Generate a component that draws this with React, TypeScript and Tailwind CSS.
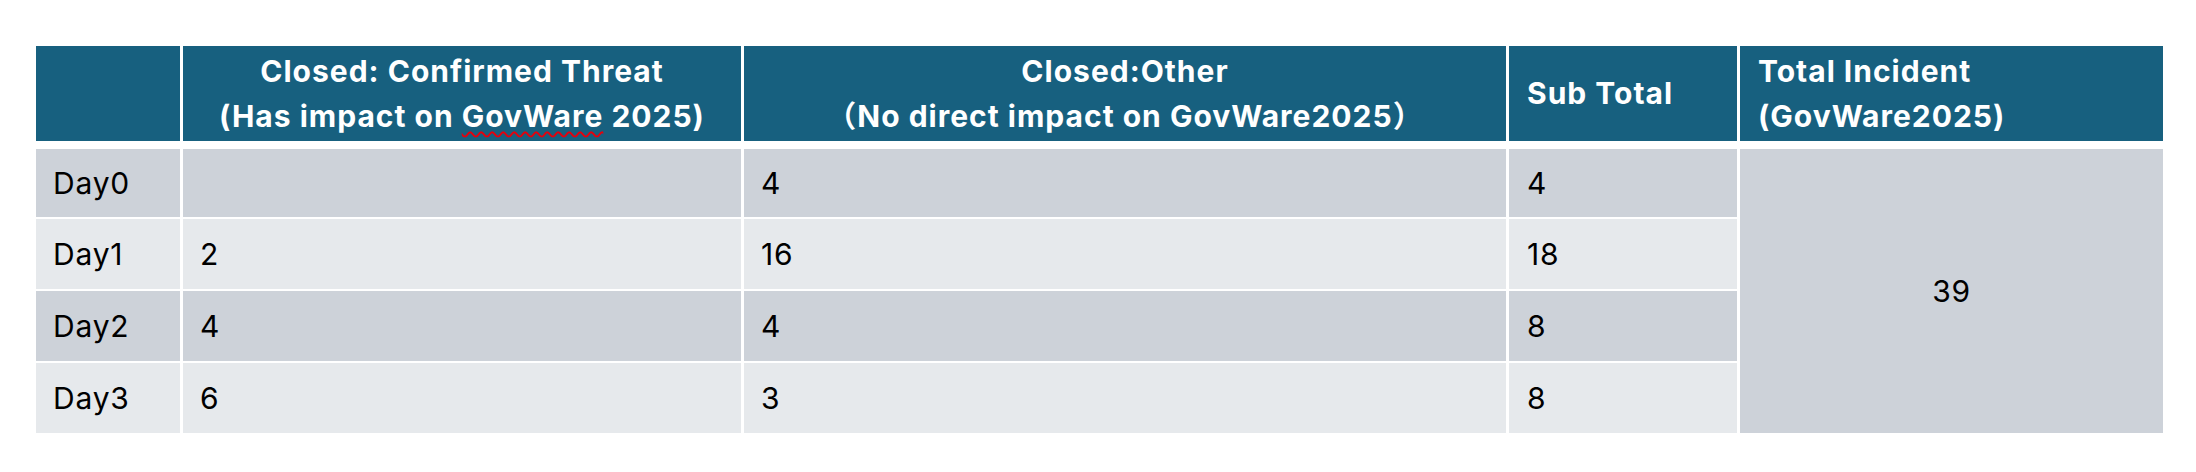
const rows = [
  { day: "Day0", threat: "", other: "4", sub: "4" },
  { day: "Day1", threat: "2", other: "16", sub: "18" },
  { day: "Day2", threat: "4", other: "4", sub: "8" },
  { day: "Day3", threat: "6", other: "3", sub: "8" },
];

const cols = "grid grid-cols-[144px_558px_762px_228px_423px] gap-x-[3px]";

export default function App() {
  return (
    <div
      className="h-[472px] w-full bg-white pt-[46px] pl-[36px]"
      style={{ fontFamily: "Inter, 'Noto Sans CJK SC', sans-serif" }}
    >
      <div className="w-[2127px]">
        {/* header */}
        <div
          className={`${cols} h-[95px] text-[30px] font-bold leading-[45px] tracking-[1px] text-white`}
        >
          <div className="bg-[#17607f]" />
          <div className="flex flex-col items-center justify-center bg-[#17607f]">
            <span>Closed: Confirmed Threat</span>
            <span>
              (Has impact on{" "}
              <span className="underline decoration-red-600 decoration-wavy decoration-[1.5px] underline-offset-[4px]">
                GovWare
              </span>{" "}
              2025)
            </span>
          </div>
          <div className="flex flex-col items-center justify-center bg-[#17607f]">
            <span>Closed:Other</span>
            <span>（No direct impact on GovWare2025）</span>
          </div>
          <div className="flex items-center bg-[#17607f] px-[18px]">Sub Total</div>
          <div className="flex flex-col justify-center bg-[#17607f] px-[18px]">
            <span>Total Incident</span>
            <span>(GovWare2025)</span>
          </div>
        </div>

        {/* body */}
        <div
          className={`${cols} mt-[8px] grid-rows-[68px_70px_70px_70px] gap-y-[2px] text-[30px] tracking-[0.8px] text-black`}
        >
          {rows.map((r, i) => {
            const bg = i % 2 === 0 ? "bg-[#cdd2d9]" : "bg-[#e6e9ec]";
            return [
              <div key={`${r.day}-a`} className={`flex items-center px-[17px] ${bg}`}>
                {r.day}
              </div>,
              <div key={`${r.day}-b`} className={`flex items-center px-[17px] ${bg}`}>
                {r.threat}
              </div>,
              <div key={`${r.day}-c`} className={`flex items-center px-[17px] ${bg}`}>
                {r.other}
              </div>,
              <div key={`${r.day}-d`} className={`flex items-center px-[18px] ${bg}`}>
                {r.sub}
              </div>,
              i === 0 ? (
                <div
                  key="total"
                  className="row-span-4 flex items-center justify-center bg-[#cdd2d9]"
                >
                  39
                </div>
              ) : null,
            ];
          })}
        </div>
      </div>
    </div>
  );
}
